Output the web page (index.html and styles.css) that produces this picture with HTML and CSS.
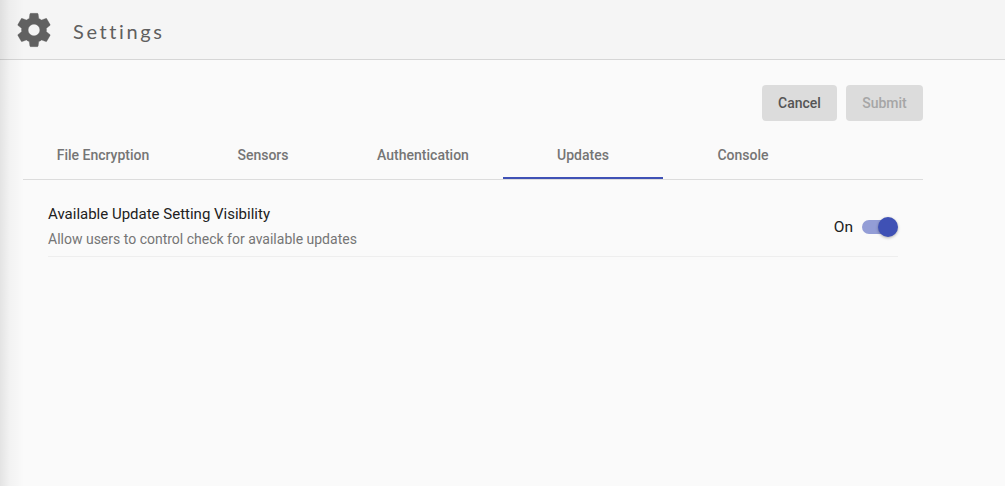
FILE: index.html
```html
<!DOCTYPE html>
<html lang="en">
<head>
<meta charset="utf-8">
<title>Settings</title>
<link rel="stylesheet" href="styles.css">
</head>
<body>
<header class="topbar">
  <svg class="gear" viewBox="0 0 24 24" aria-hidden="true"><path d="M19.43 12.98c.04-.32.07-.64.07-.98s-.03-.66-.07-.98l2.11-1.65c.19-.15.24-.42.12-.64l-2-3.46c-.12-.22-.39-.3-.61-.22l-2.49 1c-.52-.4-1.08-.73-1.69-.98l-.38-2.65C14.46 2.18 14.25 2 14 2h-4c-.25 0-.46.18-.49.42l-.38 2.65c-.61.25-1.17.59-1.69.98l-2.49-1c-.23-.09-.49 0-.61.22l-2 3.46c-.13.22-.07.49.12.64l2.11 1.65c-.04.32-.07.65-.07.98s.03.66.07.98l-2.11 1.65c-.19.15-.24.42-.12.64l2 3.46c.12.22.39.3.61.22l2.49-1c.52.4 1.08.73 1.69.98l.38 2.65c.03.24.24.42.49.42h4c.25 0 .46-.18.49-.42l.38-2.65c.61-.25 1.17-.59 1.69-.98l2.49 1c.23.09.49 0 .61-.22l2-3.46c.12-.22.07-.49-.12-.64l-2.11-1.65zM12 15.5c-1.93 0-3.5-1.57-3.5-3.5s1.57-3.5 3.5-3.5 3.5 1.57 3.5 3.5-1.57 3.5-3.5 3.5z"/></svg>
  <h1 class="title">Settings</h1>
</header>
<main class="content">
  <div class="actions">
    <button class="btn" type="button">Cancel</button>
    <button class="btn btn-disabled" type="button" disabled>Submit</button>
  </div>
  <nav class="tabs">
    <div class="tab">File Encryption</div>
    <div class="tab">Sensors</div>
    <div class="tab">Authentication</div>
    <div class="tab tab-active">Updates</div>
    <div class="tab">Console</div>
  </nav>
  <section class="setting">
    <div class="setting-text">
      <div class="setting-title">Available Update Setting Visibility</div>
      <div class="setting-desc">Allow users to control check for available updates</div>
    </div>
    <div class="toggle-wrap">
      <span class="toggle-label">On</span>
      <span class="toggle"><span class="track"></span><span class="thumb"></span></span>
    </div>
  </section>
</main>
</body>
</html>
```

FILE: styles.css
```css
* { box-sizing: border-box; }
html, body { height: 100%; }
body {
  margin: 0;
  height: 486px;
  overflow: hidden;
  position: relative;
  background: #fafafa;
  font-family: Roboto, "Liberation Sans", sans-serif;
}
body::before {
  content: "";
  position: absolute;
  left: 0; top: 0; bottom: 0;
  width: 24px;
  background: linear-gradient(to right, rgba(0,0,0,.09), rgba(0,0,0,.03) 40%, rgba(0,0,0,0));
  pointer-events: none;
}
.topbar {
  height: 60px;
  display: flex;
  align-items: center;
  padding-left: 14px;
  background: #f5f5f5;
  border-bottom: 1px solid #d6d6d6;
}
.gear { width: 40px; height: 40px; fill: #616161; stroke: #616161; stroke-width: .2; flex: none; }
.title {
  margin: 2px 0 0 19px;
  font-family: Lato, "Open Sans", sans-serif;
  font-size: 20px;
  font-weight: 400;
  letter-spacing: 2.6px;
  color: #5f5f5f;
}
.content { width: 900px; margin-left: 23px; }
.actions {
  display: flex;
  justify-content: flex-end;
  gap: 9px;
  padding-top: 25px;
}
.btn {
  height: 36px;
  border: 0;
  border-radius: 4px;
  background: #dcdcdc;
  color: #555;
  font: 500 14px Roboto, sans-serif;
  padding: 0;
  width: 75px;
}
.btn-disabled { width: 77px; color: #a6a6a6; }
.tabs {
  display: flex;
  margin-top: 11px;
  border-bottom: 1px solid #dcdcdc;
}
.tab {
  width: 160px;
  height: 47px;
  line-height: 46px;
  text-align: center;
  font-size: 14px;
  font-weight: 500;
  color: #757575;
}
.tab-active { border-bottom: 2px solid #3f51b5; }
.setting {
  margin: 0 25px;
  height: 77px;
  padding: 24px 0 7px;
  display: flex;
  align-items: center;
  justify-content: space-between;
  border-bottom: 1px solid #eeeeee;
}
.setting-title { font-size: 15px; line-height: 20px; color: #212121; }
.setting-desc { margin-top: 5px; font-size: 14px; line-height: 20px; color: #757575; }
.toggle-wrap { display: flex; align-items: center; gap: 9px; }
.toggle-label { font-size: 15.5px; color: #212121; }
.toggle { position: relative; display: block; width: 36px; height: 20px; }
.track {
  position: absolute;
  left: 0; top: 3px;
  width: 34px; height: 14px;
  border-radius: 7px;
  background: #939dd6;
}
.thumb {
  position: absolute;
  right: 0; top: 0;
  width: 20px; height: 20px;
  border-radius: 50%;
  background: #3f51b5;
  box-shadow: 0 1px 3px rgba(0,0,0,.3);
}
```
